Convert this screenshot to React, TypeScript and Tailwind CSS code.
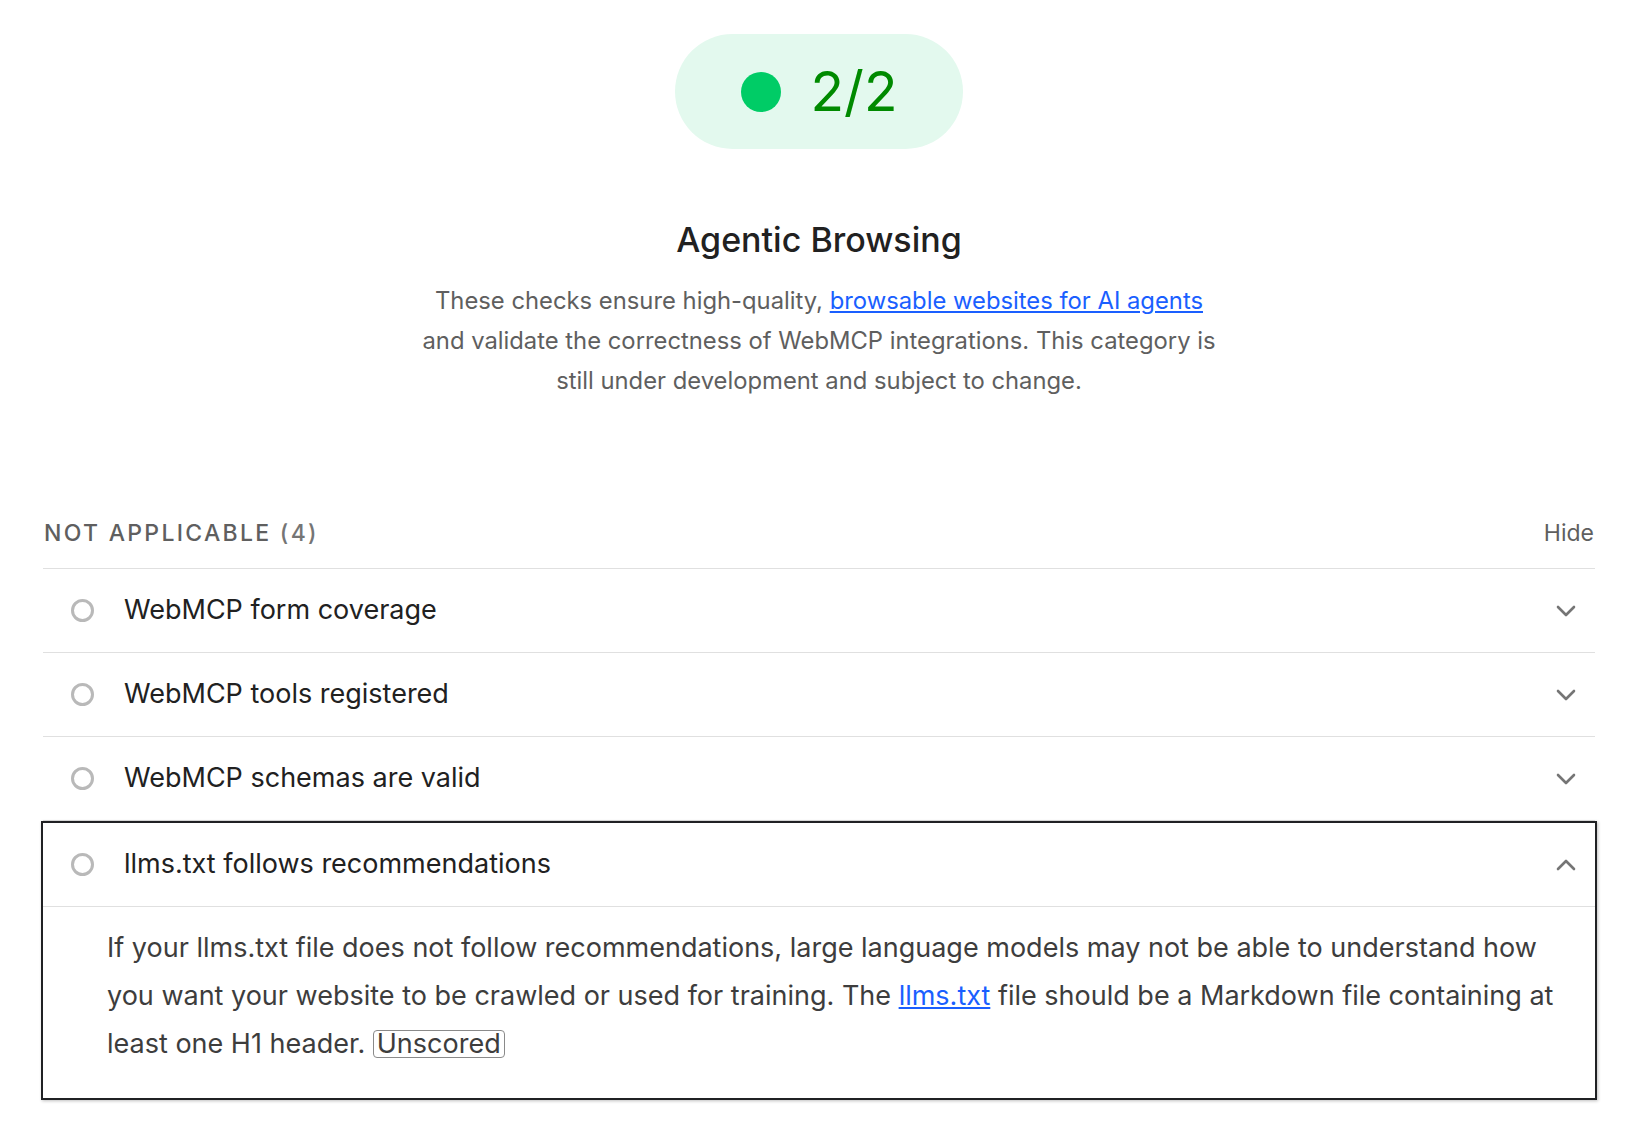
import { useState } from 'react';

type Audit = {
  id: string;
  title: string;
};

const audits: Audit[] = [
  { id: 'webmcp-form-coverage', title: 'WebMCP form coverage' },
  { id: 'webmcp-tools-registered', title: 'WebMCP tools registered' },
  { id: 'webmcp-schemas-valid', title: 'WebMCP schemas are valid' },
  { id: 'llms-txt', title: 'llms.txt follows recommendations' },
];

function Chevron({ up }: { up?: boolean }) {
  return (
    <svg width="20" height="12" viewBox="0 0 20 12" fill="none" className={up ? 'rotate-180' : ''}>
      <path d="M2 2l8 8 8-8" stroke="#757575" strokeWidth="2.6" strokeLinecap="round" strokeLinejoin="round" />
    </svg>
  );
}

function NaIcon() {
  return <span className="block w-[23px] h-[23px] shrink-0 rounded-full border-[3px] border-[#b9b9b9]" />;
}

function AuditRow({ audit, open, onToggle }: { audit: Audit; open: boolean; onToggle: () => void }) {
  const header = (
    <button
      onClick={onToggle}
      className="w-full flex items-center h-[83px] pl-[28px] pr-[19px] text-left"
    >
      <NaIcon />
      <span className="ml-[30px] flex-1 text-[27px] text-[#212121]">{audit.title}</span>
      <Chevron up={open} />
    </button>
  );

  if (!open) {
    return <div className="border-b border-[#e0e0e0]">{header}</div>;
  }

  return (
    <div className="-mx-[2px] border-2 border-[#202124] shadow-[1px_1px_3px_rgba(0,0,0,0.25)]">
      <div className="border-b border-[#e0e0e0]">{header}</div>
      <p className="pl-[64px] pr-[24px] pt-[17px] pb-[30px] text-[27px] leading-[48px] text-[#3d3d3d]">
        If your llms.txt file does not follow recommendations, large language models may not be able to
        understand how you want your website to be crawled or used for training. The{' '}
        <a href="#" className="text-[#1a5fff] underline underline-offset-2">llms.txt</a> file should be a
        Markdown file containing at least one H1 header.{' '}
        <span className="inline-block align-middle -mt-[4px] border border-[#8a8a8a] rounded-[4px] px-[3px] leading-[26px]">
          Unscored
        </span>
      </p>
    </div>
  );
}

export default function App() {
  const [openId, setOpenId] = useState<string | null>('llms-txt');
  const [hidden, setHidden] = useState(false);

  return (
    <div className="min-h-[1145px] bg-white font-['Inter','Noto_Sans',sans-serif] antialiased">
      <div className="flex flex-col items-center pt-[34px]">
        <div className="flex items-center justify-center gap-[30px] w-[288px] h-[115px] rounded-full bg-[#e3f9ee]">
          <span className="w-[40px] h-[40px] rounded-full bg-[#00cc66]" />
          <span className="text-[55px] leading-none text-[#008a00]">2/2</span>
        </div>

        <h1 className="mt-[71px] text-[34px] leading-[40px] font-medium text-[#212121]">Agentic Browsing</h1>
        <p className="mt-[21px] max-w-[805px] text-center text-[23.8px] leading-[40px] text-[#5f5f5f]">
          These checks ensure high-quality,{' '}
          <a href="#" className="text-[#1a5fff] underline underline-offset-2">browsable websites for AI agents</a>{' '}
          and validate the correctness of WebMCP integrations. This category is still under development and
          subject to change.
        </p>
      </div>

      <div className="mx-[43px] mt-[116px]">
        <div className="flex items-center justify-between pl-[1px] pb-[19px] border-b border-[#e0e0e0] leading-[32px]">
          <span className="text-[23px] font-medium tracking-[0.1em] text-[#5f5f5f]">
            NOT APPLICABLE <span className="text-[#757575]">(4)</span>
          </span>
          <button onClick={() => setHidden(!hidden)} className="text-[23px] text-[#5f5f5f] pr-[1px]">
            {hidden ? 'Show' : 'Hide'}
          </button>
        </div>

        {!hidden &&
          audits.map(a => (
            <AuditRow
              key={a.id}
              audit={a}
              open={openId === a.id}
              onToggle={() => setOpenId(openId === a.id ? null : a.id)}
            />
          ))}
      </div>
    </div>
  );
}
